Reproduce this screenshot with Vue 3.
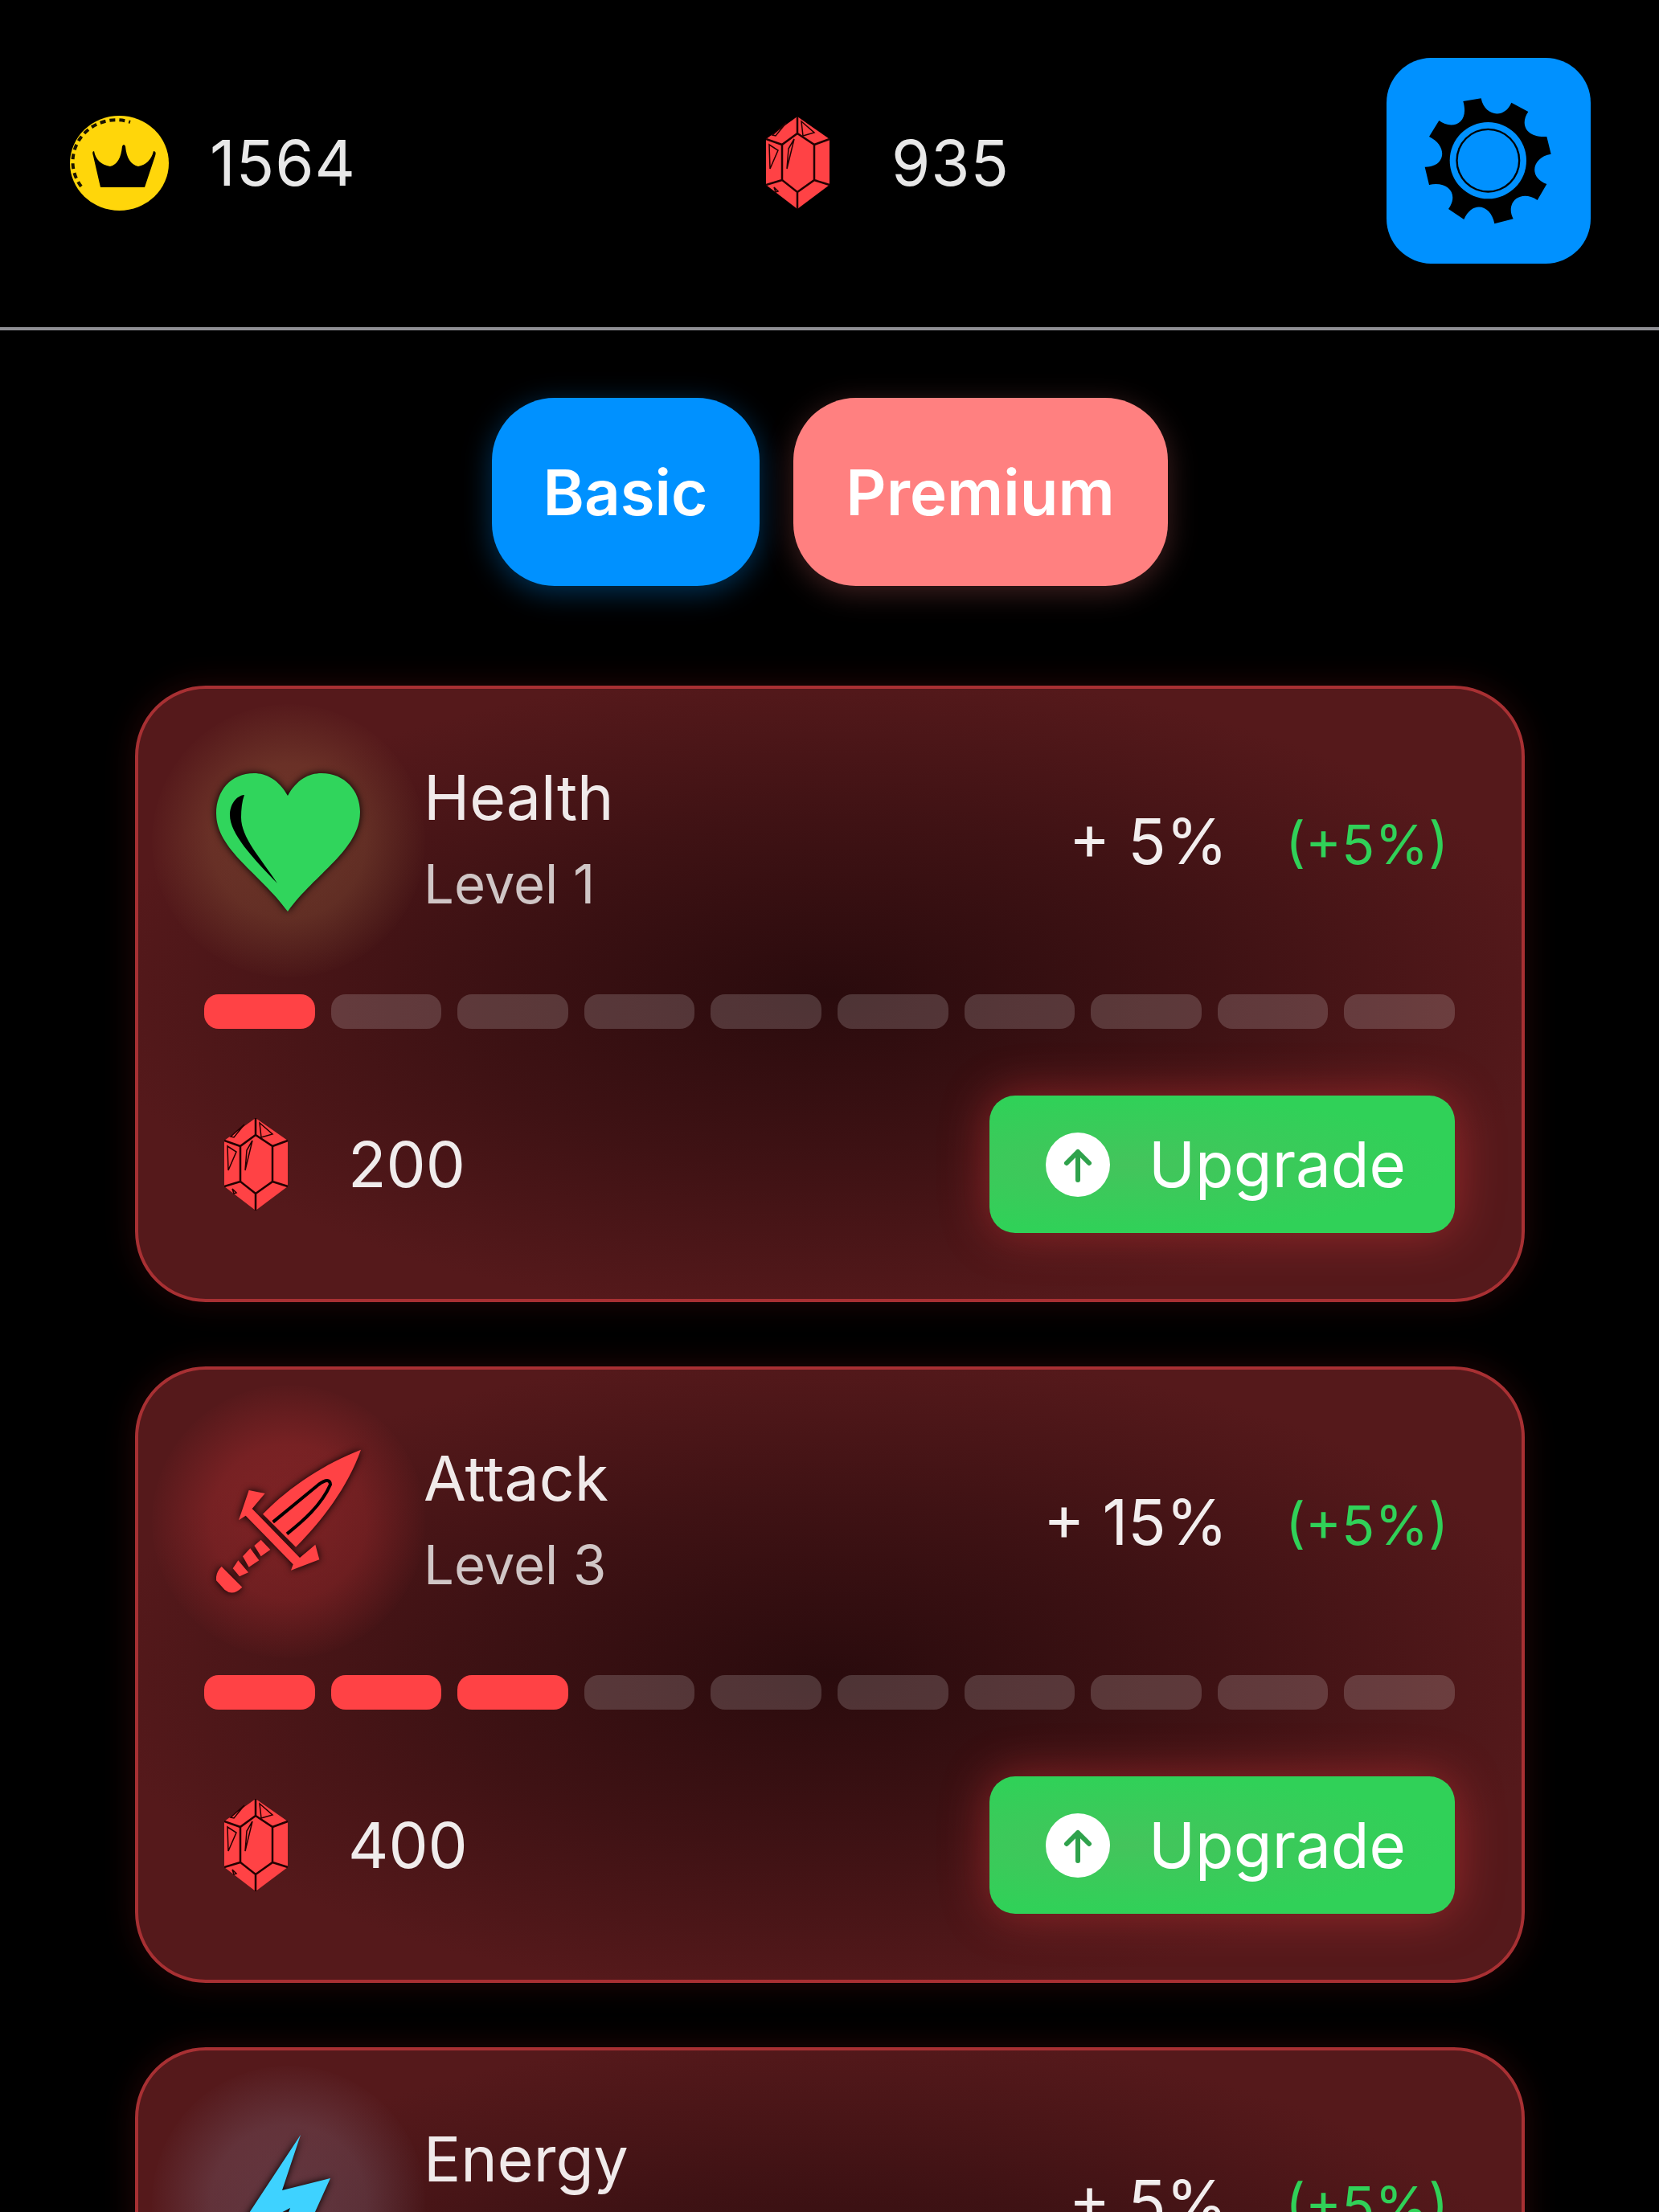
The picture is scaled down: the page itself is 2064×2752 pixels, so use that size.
<script setup>
const cards = [
  { name: 'Health', level: 1, value: '+ 5%', cost: 200, icon: 'heart' },
  { name: 'Attack', level: 3, value: '+ 15%', cost: 400, icon: 'sword' },
  { name: 'Energy', level: 1, value: '+ 5%', cost: 200, icon: 'bolt' }
]
const segments = [1, 2, 3, 4, 5, 6, 7, 8, 9, 10]
</script>

<template>
  <div class="page">
    <header class="topbar">
      <div class="stat stat-coin">
        <svg class="coin" viewBox="0 0 123 118">
          <ellipse cx="61.5" cy="59" rx="61.5" ry="59" fill="#ffd60a" />
          <path d="M14 88A54 52 0 0 1 75 8" fill="none" stroke="#1a1400" stroke-width="4" stroke-dasharray="7 5" />
          <path d="M38 89L29 50Q27 44 30 44Q33 60 50 63Q63 60 65 38Q67 34 69 38Q71 60 85 63Q100 60 104 44Q108 44 106 50L93 89Z" fill="#000" />
        </svg>
        <span class="stat-num">1564</span>
      </div>
      <div class="stat stat-gem">
        <svg class="gem" viewBox="0 0 80 115">
          <path d="M39 0L79 28V85L39 115L0 85V28Z" fill="#ff4245" />
          <path d="M39 21L60 35V79L39 94L20 79V35ZM39 0V21M39 94V115M79 28L60 35M79 85L60 79M0 85L20 79M0 28L20 35" fill="none" stroke="#200" stroke-width="2.5" />
          <path d="M8 23L25 8L12 24ZM44 6L60 20L46 24ZM4 35L15 42L5 65ZM35 28L26 65L28 40ZM10 88L15 93L12 94Z" fill="none" stroke="#200" stroke-width="1.5" />
        </svg>
        <span class="stat-num">935</span>
      </div>
      <button class="settings">
        <svg class="gear" viewBox="340 225 480 480">
          <path d="M485 243L552 232C565 300 640 310 665 248L728 282C700 320 710 380 797 375L813 440C745 450 725 525 797 552L762 612C700 570 640 620 672 682L602 700C590 630 520 610 488 684L430 645C470 590 430 540 358 555L342 488C420 490 430 410 358 375L395 315C440 350 510 330 485 243Z" fill="#000" />
          <circle cx="578" cy="464" r="143" fill="#0091ff" />
          <circle cx="578" cy="464" r="120" fill="#000" />
          <circle cx="578" cy="464" r="113" fill="#0091ff" />
        </svg>
      </button>
    </header>

    <nav class="tabs">
      <button class="tab tab-basic">Basic</button>
      <button class="tab tab-premium">Premium</button>
    </nav>

    <section class="cards">
      <article v-for="card in cards" :key="card.name" class="card">
        <div class="row-top">
          <div class="icon-box" :class="'glow-' + card.icon">
            <svg v-if="card.icon === 'heart'" class="icon" viewBox="0 0 180 180">
              <path d="M89 34C78 14 62 6 47 6C18 6 0 28 0 56C0 101 55 131 89 178C123 131 179 101 179 54C179 28 160 6 131 6C115 6 100 14 89 34Z" fill="#30d55c" />
              <path d="M35 33C24 34 17 46 17 58C17 81 45 111 76 143C55 111 31 86 31 61C31 51 32 41 35 33Z" fill="#000" />
            </svg>
            <svg v-else-if="card.icon === 'sword'" class="icon" viewBox="208 130 540 540">
              <path d="M382 372C480 270 620 180 748 132C700 270 600 400 505 495Z" fill="#ff4245" />
              <path d="M420 402L590 262Q632 232 634 262C600 340 530 400 472 446" fill="none" stroke="#000" stroke-width="12" />
              <path d="M330 283L390 295L342 352L520 535L578 486L593 542L487 582L495 560L318 378L292 395Z" fill="#ff4245" />
              <path d="M375 468L410 505L375 530L350 490ZM335 500L368 545L330 570L307 530ZM290 545L328 590L295 605L270 575ZM228 568L305 645Q270 680 240 655L208 620Q205 590 228 568Z" fill="#ff4245" />
            </svg>
            <svg v-else class="icon" viewBox="0 0 180 180">
              <path d="M105 6L82 75L142 60L108 135L62 180L92 97L20 135Z" fill="#3ed2ff" />
            </svg>
          </div>
          <div class="titles">
            <div class="name">{{ card.name }}</div>
            <div class="level">Level {{ card.level }}</div>
          </div>
          <div class="values">
            <span class="value">{{ card.value }}</span>
            <span class="bonus">(+5%)</span>
          </div>
        </div>

        <div class="segments">
          <span v-for="n in segments" :key="n" class="segment" :class="{ on: n <= card.level }"></span>
        </div>

        <div class="row-bottom">
          <div class="cost">
            <svg class="gem" viewBox="0 0 80 115">
              <path d="M39 0L79 28V85L39 115L0 85V28Z" fill="#ff4245" />
              <path d="M39 21L60 35V79L39 94L20 79V35ZM39 0V21M39 94V115M79 28L60 35M79 85L60 79M0 85L20 79M0 28L20 35" fill="none" stroke="#200" stroke-width="2.5" />
              <path d="M8 23L25 8L12 24ZM44 6L60 20L46 24ZM4 35L15 42L5 65ZM35 28L26 65L28 40ZM10 88L15 93L12 94Z" fill="none" stroke="#200" stroke-width="1.5" />
            </svg>
            <span class="cost-num">{{ card.cost }}</span>
          </div>
          <button class="upgrade">
            <svg class="arrow" viewBox="0 0 80 80">
              <circle cx="40" cy="40" r="40" fill="#fff" />
              <path d="M40 59V24M26 38L40 24L54 38" fill="none" stroke="#2fa24c" stroke-width="6" stroke-linecap="round" stroke-linejoin="round" />
            </svg>
            <span>Upgrade</span>
          </button>
        </div>
      </article>
    </section>
  </div>
</template>

<style>
html, body { background: #000; margin: 0; }
</style>

<style scoped>
.page {
  width: 2064px;
  height: 2752px;
  overflow: hidden;
  background: #000;
  font-family: Inter, "Liberation Sans", sans-serif;
  color: #eee;
}
button {
  border: 0;
  padding: 0;
  font-family: inherit;
  color: #fff;
}
.topbar {
  height: 407px;
  box-sizing: content-box;
  border-bottom: 4px solid #8e8e93;
  padding: 0 85px 0 87px;
  display: flex;
  align-items: center;
}
.stat {
  display: flex;
  align-items: center;
  margin-top: -2px;
}
.stat-coin { width: 866px; gap: 51px; }
.stat-gem { flex: 1; gap: 76px; }
.stat-num {
  font-size: 78px;
  letter-spacing: 1px;
  color: #e8e8e8;
}
.coin { width: 123px; height: 118px; }
.gem { width: 80px; height: 115px; flex: none; }
.settings {
  width: 254px;
  height: 256px;
  margin-top: -8px;
  border-radius: 56px;
  background: #0091ff;
  display: flex;
  align-items: center;
  justify-content: center;
}
.gear { width: 160px; height: 160px; }

.tabs {
  display: flex;
  justify-content: center;
  gap: 42px;
  margin-top: 84px;
}
.tab {
  height: 234px;
  border-radius: 78px;
  font-size: 78px;
  font-weight: 600;
}
.tab-basic {
  width: 333px;
  background: #0091ff;
  box-shadow: 0 8px 36px rgba(0, 145, 255, 0.35);
}
.tab-premium {
  width: 466px;
  background: #ff8080;
  box-shadow: 0 8px 36px rgba(255, 128, 128, 0.25);
}

.cards {
  display: flex;
  flex-direction: column;
  gap: 80px;
  margin: 124px 167px 0 168px;
}
.card {
  border: 4px solid #a83033;
  border-radius: 88px;
  padding: 99px 83px 82px 82px;
  background: radial-gradient(ellipse at 50% 50%, #2a0b0d 0%, #3f1214 40%, #55191b 75%);
  box-shadow: 0 0 40px rgba(255, 50, 50, 0.14);
}
.row-top {
  display: flex;
  align-items: center;
  height: 180px;
}
.icon-box {
  position: relative;
  width: 210px;
  height: 180px;
  flex: none;
  display: flex;
  justify-content: center;
}
.icon-box::before {
  content: "";
  position: absolute;
  left: -65px;
  top: -80px;
  width: 340px;
  height: 340px;
  border-radius: 50%;
}
.glow-heart::before { background: radial-gradient(circle, rgba(160, 110, 70, 0.34) 0%, rgba(160, 110, 70, 0.28) 40%, rgba(160, 110, 70, 0) 72%); }
.glow-sword::before { background: radial-gradient(circle, rgba(255, 66, 69, 0.26) 0%, rgba(255, 66, 69, 0.2) 40%, rgba(255, 66, 69, 0) 72%); }
.glow-bolt::before { background: radial-gradient(circle, rgba(130, 110, 130, 0.36) 0%, rgba(130, 110, 130, 0.3) 40%, rgba(130, 110, 130, 0) 72%); }
.icon {
  position: relative;
  width: 180px;
  height: 180px;
  filter: drop-shadow(0 0 5px #000);
}
.titles {
  margin-left: 63px;
  display: flex;
  flex-direction: column;
  gap: 14px;
}
.name {
  font-size: 77px;
  line-height: 93px;
  color: #f0eaea;
}
.level {
  font-size: 67px;
  line-height: 93px;
  color: #d0c6c6;
}
.values {
  margin-left: auto;
  display: flex;
  align-items: baseline;
  gap: 72px;
  padding-right: 8px;
}
.value { font-size: 78px; color: #f2eeee; }
.bonus { font-size: 68px; color: #30d158; }

.segments {
  display: flex;
  gap: 20px;
  margin-top: 101px;
}
.segment {
  flex: 1;
  height: 43px;
  border-radius: 18px;
  background: rgba(255, 255, 255, 0.17);
}
.segment.on { background: #ff4245; }

.row-bottom {
  display: flex;
  align-items: center;
  justify-content: space-between;
  margin-top: 83px;
}
.cost {
  display: flex;
  align-items: center;
  gap: 74px;
  margin-left: 25px;
}
.cost-num { font-size: 78px; color: #f0ecec; }
.upgrade {
  width: 579px;
  height: 171px;
  border-radius: 32px;
  background: radial-gradient(ellipse at 30% 50%, #44c45c 0%, #30d158 70%);
  box-shadow: 0 0 60px rgba(255, 66, 69, 0.42);
  display: flex;
  align-items: center;
  gap: 48px;
  padding-left: 70px;
  box-sizing: border-box;
  font-size: 78px;
}
.arrow { width: 80px; height: 80px; flex: none; }
</style>
